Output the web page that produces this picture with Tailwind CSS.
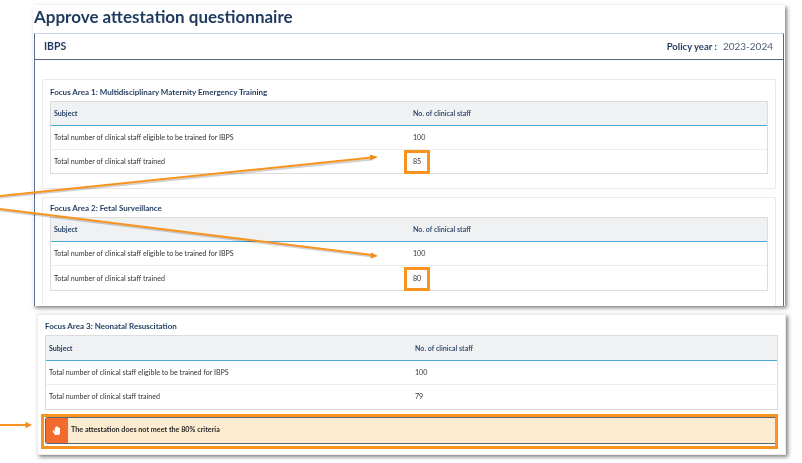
<!DOCTYPE html>
<html lang="en">
  <head>
    <meta charset="UTF-8" />
    <title>Approve attestation questionnaire</title>
    <script src="https://cdn.jsdelivr.net/npm/@tailwindcss/browser@4"></script>
  </head>
  <body class="bg-white font-['Lato',sans-serif] text-[#333333] antialiased">
    <div class="relative h-[463px] w-[802px] overflow-hidden bg-white blur-[0.35px]">
      <!-- first sheet -->
      <div class="ml-[33px] mt-[5px] h-[301px] w-[752px] bg-white shadow-[2px_2px_4px_rgba(0,0,0,0.5)]">
        <h1 class="h-[28px] pl-px text-[17px] font-bold leading-[24px] text-[#1f3a5f]">Approve attestation questionnaire</h1>
        <div class="ml-px h-[273px] w-[750px] border-x border-t border-x-[#56688f] border-t-[#c5d6ee]">
          <div class="flex h-[26px] items-center justify-between border-b border-[#54657f] pl-[9px] pr-[10px] text-[#1f3a5f]">
            <span class="text-[10.5px] font-bold">IBPS</span>
            <span class="text-[9.5px]"><b class="font-bold">Policy year :</b><span class="ml-[6px] text-[10px] text-[#50607a]">2023-2024</span></span>
          </div>
          <div class="px-[7px] pt-[19px]">
            <section class="h-[110px] rounded-[2px] border border-[#e8e8e8] px-[7px] pt-[6px]">
              <h2 class="h-[15px] text-[8px] font-bold leading-[12px] text-[#1f3a5f]">Focus Area 1: Multidisciplinary Maternity Emergency Training</h2>
              <div class="border border-[#dcdcdc] text-[7.1px]">
                <div class="grid h-[24px] grid-cols-[354px_1fr] items-center border-b border-b-[#4aa8d8] bg-[#f0f1f3] pt-[2px] font-bold text-[#1f3a5f]">
                  <span class="pl-[3px]">Subject</span><span class="pl-[8px] font-semibold">No. of clinical staff</span>
                </div>
                <div class="grid h-[24px] grid-cols-[354px_1fr] items-center border-b border-[#ececec] pt-[2px]">
                  <span class="pl-[3px]">Total number of clinical staff eligible to be trained for IBPS</span><span class="pl-[8px]">100</span>
                </div>
                <div class="grid h-[23px] grid-cols-[354px_1fr] items-center pt-[2px]">
                  <span class="pl-[3px]">Total number of clinical staff trained</span>
                  <span class="relative pl-[8px]">85<i class="absolute -top-[7px] -left-px h-[24px] w-[26px] border-[3px] border-[#f7931e]"></i></span>
                </div>
              </div>
            </section>
            <section class="mt-[8px] h-[109px] rounded-[2px] border border-b-0 border-[#e8e8e8] px-[7px] pt-[4px]">
              <h2 class="h-[15px] text-[8px] font-bold leading-[12px] text-[#1f3a5f]">Focus Area 2: Fetal Surveillance</h2>
              <div class="border border-[#dcdcdc] text-[7.1px]">
                <div class="grid h-[24px] grid-cols-[354px_1fr] items-center border-b border-b-[#4aa8d8] bg-[#f0f1f3] pt-[2px] font-bold text-[#1f3a5f]">
                  <span class="pl-[3px]">Subject</span><span class="pl-[8px] font-semibold">No. of clinical staff</span>
                </div>
                <div class="grid h-[24px] grid-cols-[354px_1fr] items-center border-b border-[#ececec] pt-[2px]">
                  <span class="pl-[3px]">Total number of clinical staff eligible to be trained for IBPS</span><span class="pl-[8px]">100</span>
                </div>
                <div class="grid h-[24px] grid-cols-[354px_1fr] items-center pt-[2px]">
                  <span class="pl-[3px]">Total number of clinical staff trained</span>
                  <span class="relative pl-[8px]">80<i class="absolute -top-[7px] -left-px h-[24px] w-[26px] border-[3px] border-[#f7931e]"></i></span>
                </div>
              </div>
            </section>
          </div>
        </div>
      </div>

      <!-- second sheet -->
      <div class="ml-[37px] mt-[8px] h-[141px] w-[749px] border border-[#ececec] bg-white px-[7px] pt-[5px] shadow-[2px_2px_4px_rgba(0,0,0,0.5)]">
        <h2 class="h-[15px] text-[8px] font-bold leading-[12px] text-[#1f3a5f]">Focus Area 3: Neonatal Resuscitation</h2>
        <div class="w-[733px] border border-[#dcdcdc] text-[7.1px]">
          <div class="grid h-[25px] grid-cols-[369px_1fr] items-center border-b border-b-[#4aa8d8] bg-[#f0f1f3] pt-[2px] font-bold text-[#1f3a5f]">
            <span class="pl-[3px]">Subject</span><span class="font-semibold">No. of clinical staff</span>
          </div>
          <div class="grid h-[24px] grid-cols-[369px_1fr] items-center border-b border-[#ececec] pt-[2px]">
            <span class="pl-[3px]">Total number of clinical staff eligible to be trained for IBPS</span><span>100</span>
          </div>
          <div class="grid h-[24px] grid-cols-[369px_1fr] items-center">
            <span class="pl-[3px]">Total number of clinical staff trained</span><span>79</span>
          </div>
        </div>
        <div class="-ml-[4px] mt-[4px] h-[35px] w-[737px] border-[3px] border-[#f7931e] bg-white pl-px">
          <div class="flex h-[27px] items-center overflow-hidden rounded-l-[3px] border-y border-l border-[#5c6470] bg-[#fdecd2]">
            <div class="flex h-full w-[22px] items-center justify-center bg-[#f26a2e]">
              <svg width="11" height="11" viewBox="0 0 24 24" fill="#ffffff"><path d="M7 22c-2-2-5-7-5.500-9-.300-1.500 1.500-2 2.500-1l2 2V6c0-1.500 2.500-1.500 2.500 0V4c0-1.500 3-1.500 3 0v1c0-1.500 3-1.500 3 0v2c0-1.500 3-1 3 .5V16c0 3-1.500 6-4 6z"/></svg>
            </div>
            <span class="ml-[3px] text-[7.2px] font-bold text-[#262626]">The attestation does not meet the 80% criteria</span>
          </div>
        </div>
      </div>

      <!-- callout arrows over the page -->
      <svg class="absolute left-0 top-0" width="802" height="463" viewBox="0 0 802 463">
        <g stroke="#000000" stroke-opacity="0.18" stroke-width="2" fill="none">
          <path d="M0 197.500L372 159.500"/>
          <path d="M0 210.500L372 256.500"/>
        </g>
        <g stroke="#f7931e" stroke-width="2" fill="none">
          <path d="M0 196L372 157.500"/>
          <path d="M0 209L372 255"/>
          <path d="M0 425H27"/>
        </g>
        <g fill="#f28c1e">
          <path d="M378 157l-7.500 3.400-.600-6z"/>
          <path d="M378 256l-7.500 2.600.600-6z"/>
          <path d="M32 425l-6.500 3.200v-6.400z"/>
        </g>
      </svg>
    </div>
  </body>
</html>
